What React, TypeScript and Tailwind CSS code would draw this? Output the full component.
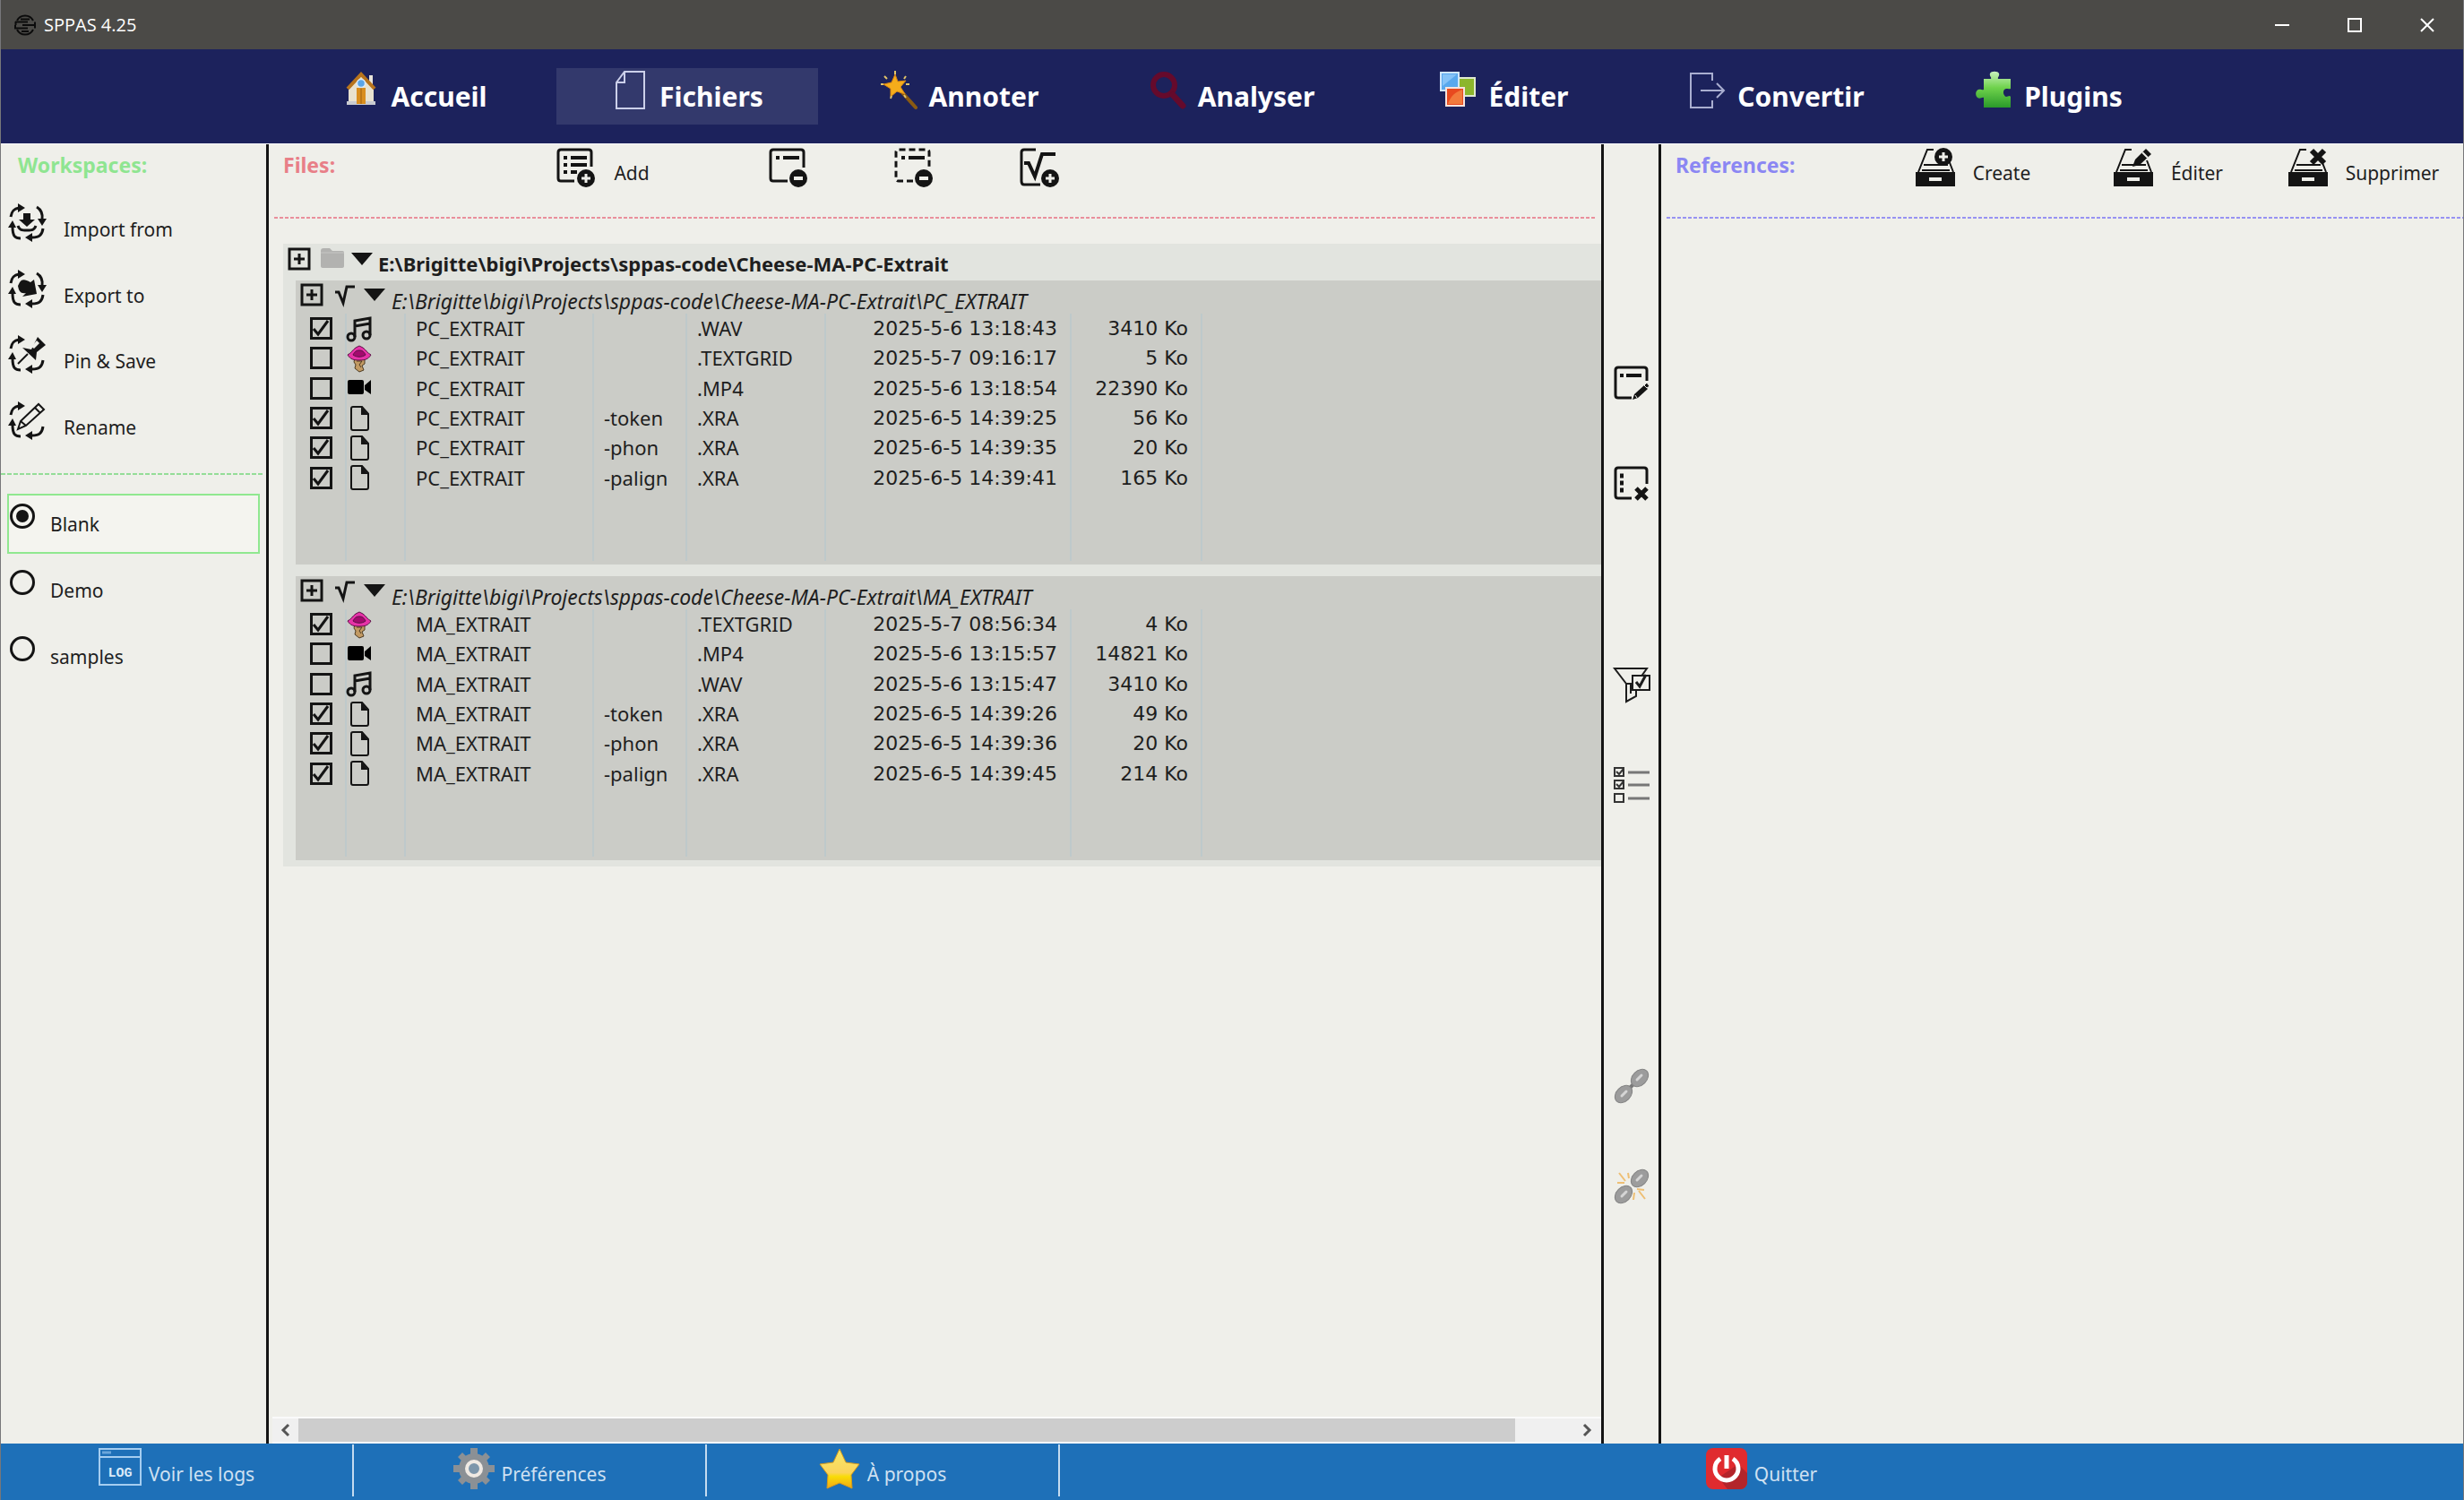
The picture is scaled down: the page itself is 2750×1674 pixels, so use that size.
import React, { useState } from 'react';
import clsx from 'clsx';

type IconProps = { children: React.ReactNode; size?: number; box?: number };

const Svg: React.FC<IconProps> = ({ children, size = 44, box }) => (
  <svg
    width={size}
    height={size}
    viewBox={`0 0 ${box ?? size} ${box ?? size}`}
    fill="none"
    aria-hidden="true"
    className="shrink-0 overflow-visible"
  >
    {children}
  </svg>
);

/* ---------- title bar ---------- */

const LogoIcon = () => (
  <Svg size={24}>
    <g stroke="#0b0b0b" strokeWidth="2">
      <path d="M3 7C5 3 8 1.500 12 1.500S19 3 21 7M3 17c2 4 5 5.500 9 5.500s7-1.500 9-5.500" />
      <path d="M1 8.500h14M9 12h14M1 12v3.500h14M23 8.500v7M7 5.500h10M8 19h8M1.500 8v4" />
    </g>
  </Svg>
);

/* ---------- main menu ---------- */

const HomeIcon = () => (
  <Svg size={42}>
    <path d="M30 4h4v12h-4z" fill="#e8e4da" />
    <path d="M7 18 21 3l14 15v18H7z" fill="#e9e2cf" />
    <path d="M5 33h32v4H5z" fill="#c9cbd0" />
    <path d="M6 19 21 3l15 16" stroke="#b8741c" strokeWidth="4" />
    <path d="M16 18h10v18H16z" fill="#d98e1f" />
    <path d="M21 18v18" stroke="#9c5f10" />
    <circle cx="21" cy="13" r="4.500" fill="#5aa5e8" stroke="#dceaf7" strokeWidth="1.500" />
  </Svg>
);

const FileIcon = () => (
  <Svg size={42}>
    <path d="M15 0h22v41H6V12zM15 0v12H6" stroke="#ccd0ea" strokeWidth="2" />
  </Svg>
);

const WandIcon = () => (
  <Svg size={42}>
    <path d="m21 20 18 20" stroke="#8a5a12" strokeWidth="4" strokeLinecap="round" />
    <path d="m16 3 3 8 9-1-6 7 5 8-9-3-7 6v-9l-8-5 9-2z" fill="#f5ac1b" stroke="#d98613" />
    <path d="M16-1v4M4 5l3 3M0 14h3M28 5l-2 3M28 14h4M11 30l1-3M28 29l-2-3" stroke="#e0c46a" strokeWidth="2" />
  </Svg>
);

const SearchIcon = () => (
  <Svg size={42}>
    <circle cx="16" cy="15" r="12" stroke="#650a2c" strokeWidth="6" />
    <path d="m26 26 11 12" stroke="#650a2c" strokeWidth="7" strokeLinecap="round" />
  </Svg>
);

const EditPicturesIcon = () => (
  <Svg size={42}>
    <path d="M20 7h19v20H20z" fill="#8cb62c" stroke="#dfe9cf" strokeWidth="2" />
    <path d="M1 1h20v20H1z" fill="#58a8ee" stroke="#cfe6fb" strokeWidth="2" />
    <path d="M3 3h16L3 16z" fill="#86c3f7" />
    <path d="M7 18h20v20H7z" fill="#e8491f" stroke="#f6e3dc" strokeWidth="2" />
    <path d="M9 36c3-9 8-13 16-16v16z" fill="#f27a3c" />
  </Svg>
);

const ExportIcon = () => (
  <Svg size={42}>
    <path d="M26 10V2H2v38h24v-8M13 21h26M31 13l8 8-8 8" stroke="#a9aed0" strokeWidth="2" />
  </Svg>
);

const PuzzleIcon = () => (
  <Svg size={42}>
    <defs>
      <linearGradient id="puzzle" x1="0" y1="0" x2="0" y2="1">
        <stop offset="0" stopColor="#c9f2bd" />
        <stop offset="0.450" stopColor="#6fd24c" />
        <stop offset="1" stopColor="#2a9a2a" />
      </linearGradient>
    </defs>
    <path
      d="M9 8h8c1-2-2-3-1-6 1-3 9-3 10 0 1 3-2 4-1 6h14v11c-3 1-5-1-7 1-2 2-1 7 2 8 2 0 4-2 5 0v12H9V29c-2-1-4 2-7 0-3-3-2-8 1-9 3-1 4 1 6 0z"
      fill="url(#puzzle)"
    />
  </Svg>
);

/* ---------- workspaces ---------- */

const CycleLeft = () => (
  <g>
    <path d="M3 14C4 8 6 5 12 4M14 38C8 38 5 36 5 25M39 27c-1 7-4 10-12 10" stroke="#141414" strokeWidth="3" />
    <path d="M11-1v10l8-5zM0 26h9l-4-8zM27 32v10l-8-5z" fill="#141414" />
  </g>
);

const CycleRight = () => (
  <g>
    <path d="M32 3c5 3 7 7 6 14" stroke="#141414" strokeWidth="3" />
    <path d="M33 16h10l-5 8z" fill="#141414" />
  </g>
);

const ImportIcon = () => (
  <Svg size={42}>
    <CycleLeft />
    <CycleRight />
    <path d="M17 10h8v7h5l-9 8-9-8h5z" fill="#141414" />
    <path d="M11 24c2 5 4 5 10 5s8 0 10-5" stroke="#141414" strokeWidth="3" />
  </Svg>
);

const ExportWorkspaceIcon = () => (
  <Svg size={42}>
    <CycleLeft />
    <CycleRight />
    <path d="M13 13c3-4 6-3 12 0l4-3 3 16-16 3 4-4c-6 1-8-2-9-8z" fill="#141414" />
  </Svg>
);

const PinIcon = () => (
  <Svg size={42}>
    <CycleLeft />
    <path d="m11 31 11-11" stroke="#141414" strokeWidth="2" />
    <path d="m16 13 10 2 7-14 9 9-10 8-1 9z" fill="#141414" />
    <path d="m26 12 6-7 3 3-6 6z" fill="#efefea" />
  </Svg>
);

const RenameIcon = () => (
  <Svg size={42}>
    <CycleLeft />
    <path d="m11 30 3-9L34 2l6 6-20 18zM14 21l6 5M30 6l6 6" stroke="#141414" strokeWidth="2" />
  </Svg>
);

/* ---------- file and reference tools ---------- */

const PlusBadge = ({ x, y }: { x: number; y: number }) => (
  <g>
    <circle cx={x} cy={y} r="10" fill="#141414" />
    <path d={`M${x - 5} ${y}h10M${x} ${y - 5}v10`} stroke="#efefea" strokeWidth="3" />
  </g>
);

const MinusBadge = () => (
  <g>
    <circle cx="33" cy="34" r="10" fill="#141414" />
    <path d="M28 34h10" stroke="#efefea" strokeWidth="4" />
  </g>
);

const AddIcon = () => (
  <Svg>
    <path d="M20 37H5c-2 0-3-1-3-3V5c0-2 1-3 3-3h31c2 0 3 1 3 3v16" stroke="#141414" strokeWidth="3" />
    <path d="M8 11h4M8 19h4M8 27h4M16 11h18M16 19h18M16 27h7" stroke="#141414" strokeWidth="4" />
    <PlusBadge x={33} y={34} />
  </Svg>
);

const RemoveIcon = () => (
  <Svg>
    <path d="M21 37H5c-2 0-3-1-3-3V5c0-2 1-3 3-3h31c2 0 3 1 3 3v17" stroke="#141414" strokeWidth="3" />
    <path d="M8 11h4M16 11h18" stroke="#141414" strokeWidth="4" />
    <MinusBadge />
  </Svg>
);

const RemoveCheckedIcon = () => (
  <Svg>
    <path
      d="M21 37H5c-2 0-3-1-3-3V5c0-2 1-3 3-3h31c2 0 3 1 3 3v17"
      stroke="#141414"
      strokeWidth="3"
      strokeDasharray="7 4"
    />
    <path d="M8 11h4M16 11h18" stroke="#141414" strokeWidth="4" />
    <MinusBadge />
  </Svg>
);

const AddRootIcon = () => (
  <Svg>
    <path d="M18 2H5C3 2 2 3 2 5v32c0 2 1 4 3 4h18" stroke="#141414" strokeWidth="3" />
    <path d="M5 17h5l7 15 8-25h15" stroke="#141414" strokeWidth="4" />
    <PlusBadge x={34} y={34} />
  </Svg>
);

const Tray = () => (
  <g>
    <path d="M0 27h44v16H0z" fill="#141414" />
    <path d="M15 35h14" stroke="#efefea" strokeWidth="4" />
    <path d="M20 2h-7L3 27M37 14l5 13M7 25h31M9 19h27" stroke="#141414" strokeWidth="2" />
  </g>
);

const CreateIcon = () => (
  <Svg>
    <Tray />
    <PlusBadge x={31} y={10} />
  </Svg>
);

const EditRefIcon = () => (
  <Svg>
    <Tray />
    <path d="m21 21 3-8L36 1l6 6-13 12z" fill="#141414" />
    <path d="m32 5 6 6" stroke="#efefea" strokeWidth="2" />
  </Svg>
);

const DeleteRefIcon = () => (
  <Svg>
    <Tray />
    <path d="m26 3 14 14M40 3 26 17" stroke="#141414" strokeWidth="6" />
  </Svg>
);

/* ---------- vertical tools ---------- */

const EditCheckedIcon = () => (
  <Svg size={40}>
    <path d="M20 36H5c-2 0-3-1-3-3V5c0-2 1-3 3-3h29c2 0 3 1 3 3v12" stroke="#141414" strokeWidth="3" />
    <path d="M7 11h4M14 11h17" stroke="#141414" strokeWidth="4" />
    <path d="m21 38 2-6 11-10 4 4-11 10z" fill="#141414" />
    <path d="m34 22 3-3 3 4-3 2zM24 33l2 3" fill="#141414" stroke="#efefea" />
  </Svg>
);

const RemoveListIcon = () => (
  <Svg size={40}>
    <path d="M20 36H5c-2 0-3-1-3-3V5c0-2 1-3 3-3h29c2 0 3 1 3 3v15" stroke="#141414" strokeWidth="3" />
    <path d="M7 11h4M7 19h4M7 27h4" stroke="#141414" strokeWidth="5" />
    <path d="m25 25 12 12M37 25 25 37" stroke="#141414" strokeWidth="5" />
  </Svg>
);

const FilterIcon = () => (
  <Svg size={40}>
    <path d="M1 2h36L25 19v14l-11 6V19zM14 19h10M19 20v10" stroke="#1c1c1c" strokeWidth="2" />
    <path d="M21 10h19v16H21z" fill="#efefea" stroke="#1c1c1c" strokeWidth="2" />
    <path d="m25 17 4 5 7-13" stroke="#1c1c1c" strokeWidth="3" />
  </Svg>
);

const CheckListIcon = () => (
  <Svg size={40}>
    <path d="M1 1h10v9H1zM1 15h10v9H1zM1 30h10v9H1z" stroke="#333" strokeWidth="2" />
    <path d="m3 5 3 3 5-6M3 19l3 3 5-6" stroke="#333" strokeWidth="2" />
    <path d="M16 6h24M16 20h24M16 35h24" stroke="#777" strokeWidth="3" />
  </Svg>
);

const ChainLinks = () => (
  <g>
    <ellipse cx="29" cy="11" rx="11" ry="8" transform="rotate(-45 29 11)" fill="#9c9c9c" stroke="#858585" />
    <ellipse cx="11" cy="29" rx="11" ry="8" transform="rotate(-45 11 29)" fill="#9c9c9c" stroke="#858585" />
    <path d="m26 13 5-5M9 31l5-5" stroke="#d5d5d5" strokeWidth="3" strokeLinecap="round" />
  </g>
);

const LinkIcon = () => (
  <Svg size={40}>
    <path d="m15 25 10-10" stroke="#777" strokeWidth="4" />
    <ChainLinks />
  </Svg>
);

const UnlinkIcon = () => (
  <Svg size={40}>
    <path
      d="m6 5 7 9M16 5l1 6M4 16h8M34 24l-8-1M35 34l-7-9M22 35l1-8"
      stroke="#eebf74"
      strokeWidth="2"
    />
    <ChainLinks />
  </Svg>
);

/* ---------- file tree ---------- */

const ExpandIcon = () => (
  <Svg size={26}>
    <path d="M2 2h22v22H2zM7 13h12M13 7v12" stroke="#141414" strokeWidth="3" />
  </Svg>
);

const FolderIcon = () => (
  <Svg size={28}>
    <path d="M1 4c0-2 1-3 3-3h7l3 3h11c2 0 2 1 2 2v15c0 1-1 2-2 2H3c-1 0-2-1-2-2z" fill="#b2b2b0" />
    <path d="M1 6h26" stroke="#c6c6c4" />
  </Svg>
);

const RootIcon = () => (
  <Svg size={24}>
    <path d="M1 10h4l5 12 4-18h9" stroke="#141414" strokeWidth="3" />
  </Svg>
);

const TriangleIcon = () => (
  <Svg size={26}>
    <path d="M1 6h24L13 20z" fill="#141414" />
  </Svg>
);

const MusicIcon = () => (
  <Svg size={28}>
    <circle cx="5" cy="23" r="4" stroke="#141414" strokeWidth="3" />
    <circle cx="22" cy="21" r="4" stroke="#141414" strokeWidth="3" />
    <path d="M9 23V5l17-3v19M9 11l17-3" stroke="#141414" strokeWidth="3" />
  </Svg>
);

// Praat's mouth over an ear
const PraatIcon = () => (
  <Svg size={28}>
    <path d="M9 14h11v6l-3 2 2 5-5 2-5-4 1-4-2-3z" fill="#c29a63" stroke="#4d3b22" />
    <path d="M11 17h6l-3 4 2 3" stroke="#4d3b22" />
    <path d="M1 10C5 8 7 4 10 2l4-2 4 2c3 2 5 6 9 8-3 5-7 6-13 6S4 15 1 10z" fill="#e733a8" stroke="#5c1247" />
    <path d="M7 10c2-4 4-5 7-5s5 1 7 5c-4 3-10 3-14 0z" fill="#a30a6e" stroke="#5c1247" />
  </Svg>
);

const VideoIcon = () => (
  <Svg size={28}>
    <rect x="1" y="5" width="18" height="16" rx="2" fill="#000" />
    <path d="m20 11 7-6v16l-7-5z" fill="#000" />
  </Svg>
);

const PageIcon = () => (
  <Svg size={28}>
    <path d="M5 3c0-1 1-2 2-2h10l7 8v16c0 1-1 2-2 2H7c-1 0-2-1-2-2z" stroke="#141414" strokeWidth="2" />
    <path d="M16 1v9h8z" fill="#141414" />
  </Svg>
);

/* ---------- footer ---------- */

const LogIcon = () => (
  <svg width="48" height="42" viewBox="0 0 48 42" fill="none" className="shrink-0">
    <path d="M1 1h46v40H1zM1 10h46" stroke="#a5cdf0" strokeWidth="2" />
    <path d="M4 5h10" stroke="#6aa5da" strokeWidth="3" />
    <text
      x="24"
      y="32"
      textAnchor="middle"
      fontFamily="Liberation Mono"
      fontWeight="700"
      fontSize="15"
      fill="#dbeaf8"
    >
      LOG
    </text>
  </svg>
);

const GearIcon = () => (
  <Svg size={46}>
    <g fill="#8b9095">
      <circle cx="23" cy="23" r="17" />
      <path d="M19 0h8v46h-8zM0 19h46v8H0z" />
      <path d="m5 10 5-5 31 31-5 5zM36 5l5 5-31 31-5-5z" />
    </g>
    <circle cx="23" cy="23" r="8" fill="#7d96ab" stroke="#efe9e3" strokeWidth="4" />
  </Svg>
);

const StarIcon = () => (
  <Svg size={46}>
    <defs>
      <linearGradient id="star" x1="0" y1="0" x2="0" y2="1">
        <stop offset="0" stopColor="#f7ea6a" />
        <stop offset="0.600" stopColor="#fbd45c" />
        <stop offset="0.700" stopColor="#f8dc08" />
        <stop offset="1" stopColor="#f3a712" />
      </linearGradient>
    </defs>
    <path
      d="m23 1 7 15 15 2-9 12 1 15-14-6-14 6 1-15L1 18l15-2z"
      fill="url(#star)"
      stroke="#d59a1c"
      strokeLinejoin="round"
    />
  </Svg>
);

const PowerIcon = () => (
  <Svg size={46}>
    <rect width="46" height="46" rx="8" fill="#e02b2f" />
    <path d="m36 18 10 10v10a8 8 0 0 1-8 8H24L14 33z" fill="#b3252b" />
    <path d="M16 12a13 13 0 1 0 14 0" stroke="#fff" strokeWidth="5" />
    <path d="M23 8v15" stroke="#fff" strokeWidth="5" />
  </Svg>
);

/* ---------- data ---------- */

const PAGES = [
  { label: 'Accueil', icon: <HomeIcon /> },
  { label: 'Fichiers', icon: <FileIcon /> },
  { label: 'Annoter', icon: <WandIcon /> },
  { label: 'Analyser', icon: <SearchIcon /> },
  { label: 'Éditer', icon: <EditPicturesIcon /> },
  { label: 'Convertir', icon: <ExportIcon /> },
  { label: 'Plugins', icon: <PuzzleIcon /> },
];

const WORKSPACE_ACTIONS = [
  { label: 'Import from', icon: <ImportIcon /> },
  { label: 'Export to', icon: <ExportWorkspaceIcon /> },
  { label: 'Pin & Save', icon: <PinIcon /> },
  { label: 'Rename', icon: <RenameIcon /> },
];

const WORKSPACES = ['Blank', 'Demo', 'samples'];

type FileKind = 'audio' | 'praat' | 'video' | 'page';

interface FileRow {
  checked: boolean;
  kind: FileKind;
  suffix: string;
  ext: string;
  date: string;
  size: string;
}

const KIND_ICONS: Record<FileKind, React.ReactNode> = {
  audio: <MusicIcon />,
  praat: <PraatIcon />,
  video: <VideoIcon />,
  page: <PageIcon />,
};

const ROOT_PATH = 'E:\\Brigitte\\bigi\\Projects\\sppas-code\\Cheese-MA-PC-Extrait';

const FILE_ROOTS: { name: string; files: FileRow[] }[] = [
  {
    name: 'PC_EXTRAIT',
    files: [
      { checked: true, kind: 'audio', suffix: '', ext: '.WAV', date: '2025-5-6 13:18:43', size: '3410 Ko' },
      { checked: false, kind: 'praat', suffix: '', ext: '.TEXTGRID', date: '2025-5-7 09:16:17', size: '5 Ko' },
      { checked: false, kind: 'video', suffix: '', ext: '.MP4', date: '2025-5-6 13:18:54', size: '22390 Ko' },
      { checked: true, kind: 'page', suffix: '-token', ext: '.XRA', date: '2025-6-5 14:39:25', size: '56 Ko' },
      { checked: true, kind: 'page', suffix: '-phon', ext: '.XRA', date: '2025-6-5 14:39:35', size: '20 Ko' },
      { checked: true, kind: 'page', suffix: '-palign', ext: '.XRA', date: '2025-6-5 14:39:41', size: '165 Ko' },
    ],
  },
  {
    name: 'MA_EXTRAIT',
    files: [
      { checked: true, kind: 'praat', suffix: '', ext: '.TEXTGRID', date: '2025-5-7 08:56:34', size: '4 Ko' },
      { checked: false, kind: 'video', suffix: '', ext: '.MP4', date: '2025-5-6 13:15:57', size: '14821 Ko' },
      { checked: false, kind: 'audio', suffix: '', ext: '.WAV', date: '2025-5-6 13:15:47', size: '3410 Ko' },
      { checked: true, kind: 'page', suffix: '-token', ext: '.XRA', date: '2025-6-5 14:39:26', size: '49 Ko' },
      { checked: true, kind: 'page', suffix: '-phon', ext: '.XRA', date: '2025-6-5 14:39:36', size: '20 Ko' },
      { checked: true, kind: 'page', suffix: '-palign', ext: '.XRA', date: '2025-6-5 14:39:45', size: '214 Ko' },
    ],
  },
];

/* ---------- components ---------- */

const TextButton: React.FC<{ icon: React.ReactNode; label: string; className?: string }> = ({
  icon,
  label,
  className,
}) => (
  <button type="button" className={clsx('flex items-start gap-5', className)}>
    {icon}
    <span className="pt-[14px] leading-7 whitespace-nowrap">{label}</span>
  </button>
);

const IconButton: React.FC<{ icon: React.ReactNode; label: string; className?: string }> = ({
  icon,
  label,
  className,
}) => (
  <button type="button" aria-label={label} className={clsx('flex justify-center', className)}>
    {icon}
  </button>
);

const FileCheckbox: React.FC<{ label: string; defaultChecked: boolean }> = ({ label, defaultChecked }) => (
  <span className="relative ml-4 block h-[25px] w-[25px]">
    <input
      type="checkbox"
      aria-label={label}
      defaultChecked={defaultChecked}
      className="peer block h-[25px] w-[25px] appearance-none border-[3px] border-[#141414]"
    />
    <svg
      viewBox="0 0 25 25"
      fill="none"
      className="pointer-events-none absolute inset-0 hidden h-[25px] w-[25px] peer-checked:block"
    >
      <path d="m4 13 5 6L20 4" stroke="#141414" strokeWidth="3" />
    </svg>
  </span>
);

const FileTable: React.FC<{ name: string; files: FileRow[] }> = ({ name, files }) => (
  <section className="h-[317px] bg-[#cbccc7]">
    <header className="flex h-[34px] items-start pt-[3px] pl-[5px]">
      <button type="button" aria-label="Expand">
        <ExpandIcon />
      </button>
      <span className="ml-3">
        <RootIcon />
      </span>
      <button type="button" aria-label="Collapse" className="ml-2">
        <TriangleIcon />
      </button>
      <h3 className="ml-[6px] pt-[6px] text-[23px] leading-7 whitespace-nowrap italic">{`${ROOT_PATH}\\${name}`}</h3>
    </header>
    <table className="mt-[3px] h-[276px] w-full table-fixed border-collapse text-[22px]">
      <colgroup>
        <col className="w-[56px]" />
        <col className="w-[66px]" />
        <col className="w-[210px]" />
        <col className="w-[104px]" />
        <col className="w-[155px]" />
        <col className="w-[274px]" />
        <col className="w-[146px]" />
        <col />
      </colgroup>
      <tbody className="[&_td]:border-[#bec9cb] [&_td]:p-0 [&_td:not(:last-child)]:border-r-2">
        {files.map((file) => (
          <tr key={file.suffix + file.ext} className="h-[33px] leading-[33px] nth-[3n]:h-[34px]">
            <td>
              <FileCheckbox label={`${name}${file.suffix}${file.ext}`} defaultChecked={file.checked} />
            </td>
            <td>{KIND_ICONS[file.kind]}</td>
            <td><span className="pl-[11px]">{name}</span></td>
            <td><span className="pl-[11px]">{file.suffix}</span></td>
            <td><span className="pl-[11px]">{file.ext}</span></td>
            <td className="text-right font-['DejaVu_Sans']"><span className="pr-[14px]">{file.date}</span></td>
            <td className="text-right font-['DejaVu_Sans']"><span className="pr-[14px]">{file.size}</span></td>
            <td />
          </tr>
        ))}
        <tr>
          {Array.from({ length: 8 }, (_, i) => (
            <td key={i} />
          ))}
        </tr>
      </tbody>
    </table>
  </section>
);

const TitleBar = () => (
  <div className="flex h-[55px] items-center bg-[#4b4a47] font-['Open_Sans',sans-serif] text-xl text-white">
    <div className="flex flex-1 items-center gap-[9px] pl-[15px]">
      <LogoIcon />
      <h1>SPPAS 4.25</h1>
    </div>
    <button type="button" aria-label="Minimize" className="flex w-[81px] justify-center">
      <Svg size={16}><path d="M0 8h16" stroke="#fff" strokeWidth="2" /></Svg>
    </button>
    <button type="button" aria-label="Maximize" className="flex w-[81px] justify-center">
      <Svg size={16}><path d="M1 1h14v14H1z" stroke="#fff" strokeWidth="2" /></Svg>
    </button>
    <button type="button" aria-label="Close" className="flex w-[81px] justify-center">
      <Svg size={16}><path d="m1 1 14 14M15 1 1 15" stroke="#fff" strokeWidth="2" /></Svg>
    </button>
  </div>
);

const MainMenu = () => {
  const [page, setPage] = useState('Fichiers');

  return (
    <nav className="flex h-[105px] items-start justify-center gap-3 bg-[#1c225c] pt-[21px] text-[30px] font-bold text-white">
      {PAGES.map(({ label, icon }) => (
        <button
          key={label}
          type="button"
          onClick={() => setPage(label)}
          className={clsx('flex h-[63px] w-[292px] items-start justify-center gap-3', page === label && 'bg-[#33396c]')}
        >
          <span className="pt-1">{icon}</span>
          <span className="pt-[11px] leading-[42px]">{label}</span>
        </button>
      ))}
    </nav>
  );
};

const WorkspacesPanel = () => {
  const [current, setCurrent] = useState('Blank');

  return (
    <aside className="w-[299px] shrink-0 border-r-[3px] border-[#141414]">
      <h2 className="h-[67px] pt-[9px] pl-[19px] text-[23px] leading-7 font-bold text-[#8fe591]">Workspaces:</h2>
      <div className="grid h-[300px] grid-rows-[74px_73px_74px_73px]">
        {WORKSPACE_ACTIONS.map(({ label, icon }) => (
          <TextButton key={label} icon={icon} label={label} className="pl-2" />
        ))}
      </div>
      <div className="mr-1 h-[2px] bg-[repeating-linear-gradient(90deg,#94dd98_0_5px,transparent_5px_7px)]" />
      <div className="mt-[21px] flex flex-col gap-[7px] px-[7px]">
        {WORKSPACES.map((name) => (
          <label
            key={name}
            className={clsx(
              'flex h-[67px] items-start border-2 pt-[9px] pl-px',
              current === name ? 'border-[#90e890] bg-[#f4f4ef]' : 'border-transparent'
            )}
          >
            <input
              type="radio"
              name="workspace"
              checked={current === name}
              onChange={() => setCurrent(name)}
              className="h-7 w-7 appearance-none rounded-full border-[3px] border-[#141414] bg-clip-content p-1 checked:bg-[#141414]"
            />
            <span className="pt-[9px] pl-[17px] leading-7">{name}</span>
          </label>
        ))}
      </div>
    </aside>
  );
};

const FilesPanel = () => (
  <section className="flex min-w-0 flex-1 flex-col border-r-[3px] border-[#141414]">
    <header className="flex h-[81px] items-start">
      <h2 className="w-[236px] pt-[9px] pl-4 text-[23px] leading-7 font-bold text-[#e87f88]">Files:</h2>
      <TextButton icon={<AddIcon />} label="Add" className="w-[274px] justify-center pt-1" />
      <IconButton icon={<RemoveIcon />} label="Remove" className="w-[140px] pt-1" />
      <IconButton icon={<RemoveCheckedIcon />} label="Remove checked" className="w-[140px] pt-1" />
      <IconButton icon={<AddRootIcon />} label="Add root" className="w-[140px] pt-1" />
    </header>
    <div className="mx-[6px] h-[2px] bg-[repeating-linear-gradient(90deg,#e98f9c_0_4px,transparent_4px_6px)]" />

    <div className="flex-1 overflow-hidden pt-7 pl-4">
      <div className="bg-[#e2e4df] pb-[7px] pl-[14px]">
        <header className="-ml-[9px] flex h-[41px] items-start pt-1">
          <button type="button" aria-label="Expand">
            <ExpandIcon />
          </button>
          <span className="ml-[10px]">
            <FolderIcon />
          </span>
          <button type="button" aria-label="Collapse" className="ml-[6px]">
            <TriangleIcon />
          </button>
          <h3 className="ml-[5px] pt-1 text-[22px] leading-7 font-bold whitespace-nowrap">{ROOT_PATH}</h3>
        </header>
        <div className="flex flex-col gap-[13px]">
          {FILE_ROOTS.map((root) => (
            <FileTable key={root.name} {...root} />
          ))}
        </div>
      </div>
    </div>

    <div className="ml-1 flex h-[30px] items-stretch border-t-2 border-b-2 border-[#fafafa] bg-[#f0f0f0]">
      <button type="button" aria-label="Scroll left" className="flex w-[29px] items-center justify-center">
        <Svg size={14}><path d="M10 1 4 7l6 6" stroke="#555" strokeWidth="3" /></Svg>
      </button>
      <div className="flex-1">
        <div className="h-full w-[95.5%] bg-[#cdcdcd]" />
      </div>
      <button type="button" aria-label="Scroll right" className="flex w-8 items-center justify-center">
        <Svg size={14}><path d="m4 1 6 6-6 6" stroke="#555" strokeWidth="3" /></Svg>
      </button>
    </div>
  </section>
);

const AssociateBar = () => (
  <div className="grid w-[64px] shrink-0 auto-rows-[112px] content-start justify-center border-r-[3px] border-[#141414] pt-[211px]">
    <IconButton icon={<EditCheckedIcon />} label="Edit checked" className="row-start-1 items-center" />
    <IconButton icon={<RemoveListIcon />} label="Remove attribute" className="row-start-2 items-center" />
    <IconButton icon={<FilterIcon />} label="Filter" className="row-start-4 items-center" />
    <IconButton icon={<CheckListIcon />} label="Check all" className="row-start-5 items-center" />
    <IconButton icon={<LinkIcon />} label="Link" className="row-start-8 items-center" />
    <IconButton icon={<UnlinkIcon />} label="Unlink" className="row-start-9 items-center" />
  </div>
);

const ReferencesPanel = () => (
  <section className="w-[895px] shrink-0">
    <header className="flex h-[81px] items-start pr-[2px]">
      <h2 className="flex-1 pt-[9px] pl-4 text-[23px] leading-7 font-bold text-[#8b87f3]">References:</h2>
      <TextButton icon={<CreateIcon />} label="Create" className="w-[218px] justify-center pt-1" />
      <TextButton icon={<EditRefIcon />} label="Éditer" className="w-[218px] justify-center pt-1" />
      <TextButton icon={<DeleteRefIcon />} label="Supprimer" className="w-[218px] justify-center pt-1" />
    </header>
    <div className="ml-[6px] h-[2px] bg-[repeating-linear-gradient(90deg,#9793f2_0_4px,transparent_4px_6px)]" />
  </section>
);

const FooterButton: React.FC<{ icon: React.ReactNode; label: string; last?: boolean }> = ({ icon, label, last }) => (
  <button
    type="button"
    className={clsx(
      'mb-1 flex h-[58px] items-start justify-center gap-2 pt-1',
      last ? 'flex-1' : 'w-[394px] border-r-2 border-[#c4dbf0]'
    )}
  >
    {icon}
    <span className="pt-[15px] leading-7">{label}</span>
  </button>
);

const App: React.FC = () => (
  <div className="flex min-h-screen flex-col border-x border-[#77777a] bg-[#efefea] font-['Noto_Sans','Open_Sans',sans-serif] text-[21px] text-[#1e1e1e]">
    <TitleBar />
    <MainMenu />
    <main className="flex flex-1 border-t border-[#f7f7fb]">
      <WorkspacesPanel />
      <FilesPanel />
      <AssociateBar />
      <ReferencesPanel />
    </main>
    <footer className="flex h-[63px] items-start bg-[#1e70b8] pt-px text-[#cfe1f2]">
      <FooterButton icon={<LogIcon />} label="Voir les logs" />
      <FooterButton icon={<GearIcon />} label="Préférences" />
      <FooterButton icon={<StarIcon />} label="À propos" />
      <FooterButton icon={<PowerIcon />} label="Quitter" last />
    </footer>
  </div>
);

export default App;
